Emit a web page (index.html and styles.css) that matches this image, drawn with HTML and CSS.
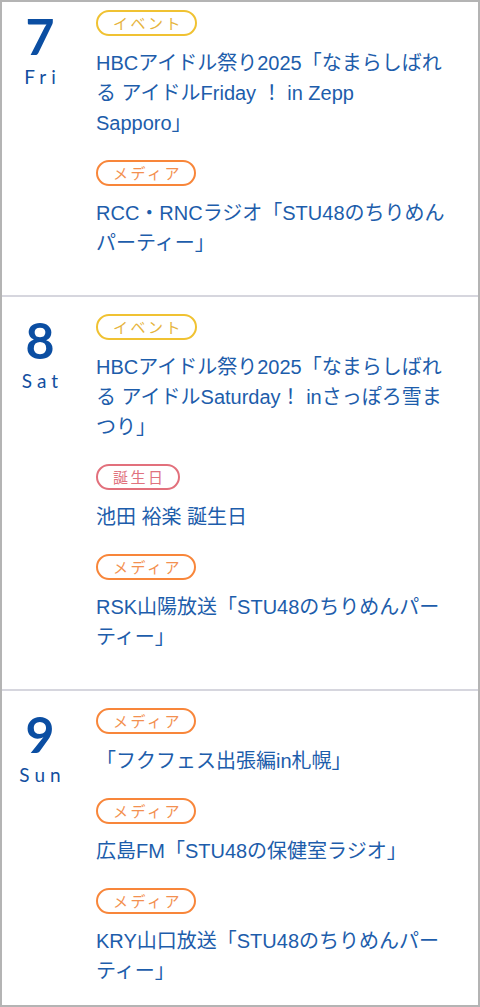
FILE: index.html
```html
<!DOCTYPE html>
<html lang="ja">
<head>
    <meta charset="utf-8">
    <title>スケジュール</title>
    <link rel="stylesheet" href="styles.css">
</head>
<body>
    <div class="schedule">
        <!-- 7 Fri -->
        <section class="day">
            <div class="date">
                <span class="num">7</span>
                <span class="dow">Fri</span>
            </div>
            <ul class="events">
                <li class="event">
                    <span class="tag tag-event">イベント</span>
                    <p class="title">HBCアイドル祭り2025「なまらしばれる アイドルFriday ！ in Zepp Sapporo」</p>
                </li>
                <li class="event">
                    <span class="tag tag-media">メディア</span>
                    <p class="title">RCC・RNCラジオ「STU48のちりめんパーティー」</p>
                </li>
            </ul>
        </section>

        <!-- 8 Sat -->
        <section class="day">
            <div class="date">
                <span class="num">8</span>
                <span class="dow">Sat</span>
            </div>
            <ul class="events">
                <li class="event">
                    <span class="tag tag-event">イベント</span>
                    <p class="title">HBCアイドル祭り2025「なまらしばれる アイドルSaturday！ inさっぽろ雪まつり」</p>
                </li>
                <li class="event">
                    <span class="tag tag-birthday">誕生日</span>
                    <p class="title">池田 裕楽 誕生日</p>
                </li>
                <li class="event">
                    <span class="tag tag-media">メディア</span>
                    <p class="title">RSK山陽放送「STU48のちりめんパーティー」</p>
                </li>
            </ul>
        </section>

        <!-- 9 Sun -->
        <section class="day">
            <div class="date">
                <span class="num">9</span>
                <span class="dow">Sun</span>
            </div>
            <ul class="events">
                <li class="event">
                    <span class="tag tag-media">メディア</span>
                    <p class="title">「フクフェス出張編in札幌」</p>
                </li>
                <li class="event">
                    <span class="tag tag-media">メディア</span>
                    <p class="title">広島FM「STU48の保健室ラジオ」</p>
                </li>
                <li class="event">
                    <span class="tag tag-media">メディア</span>
                    <p class="title">KRY山口放送「STU48のちりめんパーティー」</p>
                </li>
            </ul>
        </section>
    </div>
</body>
</html>
```

FILE: styles.css
```css
body {
    margin: 0;
    background: #fff;
    font-family: "Liberation Sans", "Noto Sans CJK JP", sans-serif;
}

.schedule {
    border: 2px solid #b4b4b4;
    min-height: 1007px;
    box-sizing: border-box;
}

.day {
    display: flex;
    padding: 17px 30px 37px 0;
    border-bottom: 2px solid #d6d6de;
}

.day:first-child {
    padding-top: 8px;
}

.day:last-child {
    border-bottom: none;
    padding-bottom: 19px;
}

.date {
    flex: none;
    width: 76px;
    margin-right: 18px;
    display: flex;
    flex-direction: column;
    align-items: center;
    color: #0b4ea2;
}

.num {
    font-family: Lato, sans-serif;
    font-weight: 700;
    font-size: 50px;
    line-height: 1;
    margin-top: 1px;
}

.dow {
    font-family: Lato, sans-serif;
    font-weight: 400;
    font-size: 19px;
    letter-spacing: 5px;
    margin-right: -5px;
    margin-top: 4px;
    color: #134f9f;
}

.events {
    list-style: none;
    margin: 0;
    padding: 0;
    flex: 1;
    display: flex;
    flex-direction: column;
    gap: 22px;
}

.event {
    display: flex;
    flex-direction: column;
    align-items: flex-start;
}

.tag {
    display: inline-block;
    height: 26px;
    box-sizing: border-box;
    padding: 0 12px 0 15px;
    border: 2px solid;
    border-radius: 13px;
    font-family: "Noto Sans CJK JP", sans-serif;
    font-size: 15px;
    line-height: 21px;
    letter-spacing: 2.5px;
}

.tag-event {
    border-color: #f0c232;
    color: #e6b43c;
}

.tag-media {
    border-color: #f8863a;
    color: #f39050;
}

.tag-birthday {
    border-color: #e2707c;
    color: #e0727e;
}

.title {
    margin: 12px 0 0;
    font-size: 20px;
    line-height: 30px;
    color: #1d5dab;
    text-spacing-trim: space-all;
}
```
